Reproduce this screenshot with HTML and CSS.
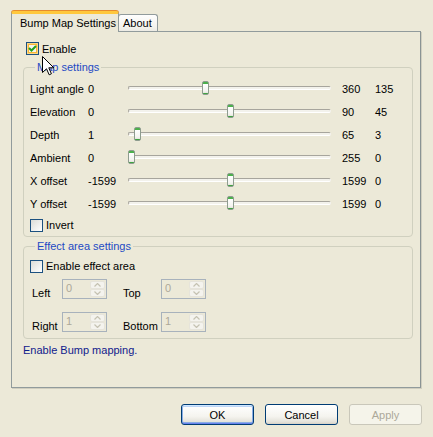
FILE: index.html
```html
<!DOCTYPE html>
<html>
<head>
<meta charset="utf-8">
<link rel="stylesheet" href="styles.css">
</head>
<body>
<div class="dialog">
  <div class="tabs">
    <div class="tab active">Bump Map Settings</div>
    <div class="tab">About</div>
  </div>
  <div class="page">
    <div class="check enable">
      <span class="box checked hover"><svg viewBox="0 0 11 11" width="11" height="11"><path d="M2 5 L4.5 7.5 L9 3" fill="none" stroke="#21A121" stroke-width="2"/></svg></span>
      <span>Enable</span>
    </div>
    <fieldset class="group map">
      <legend>Map settings</legend>
      <div class="sliders">
        <span class="lbl">Light angle</span><span class="min">0</span><div class="track"><div class="groove"></div><div class="thumb" style="left:74px"></div></div><span class="max">360</span><span class="cur">135</span>
        <span class="lbl">Elevation</span><span class="min">0</span><div class="track"><div class="groove"></div><div class="thumb" style="left:99px"></div></div><span class="max">90</span><span class="cur">45</span>
        <span class="lbl">Depth</span><span class="min">1</span><div class="track"><div class="groove"></div><div class="thumb" style="left:6px"></div></div><span class="max">65</span><span class="cur">3</span>
        <span class="lbl">Ambient</span><span class="min">0</span><div class="track"><div class="groove"></div><div class="thumb" style="left:0px"></div></div><span class="max">255</span><span class="cur">0</span>
        <span class="lbl">X offset</span><span class="min">-1599</span><div class="track"><div class="groove"></div><div class="thumb" style="left:99px"></div></div><span class="max">1599</span><span class="cur">0</span>
        <span class="lbl">Y offset</span><span class="min">-1599</span><div class="track"><div class="groove"></div><div class="thumb" style="left:99px"></div></div><span class="max">1599</span><span class="cur">0</span>
      </div>
      <div class="check invert"><span class="box"></span><span>Invert</span></div>
    </fieldset>
    <fieldset class="group effect">
      <legend>Effect area settings</legend>
      <div class="check area"><span class="box"></span><span>Enable effect area</span></div>
      <div class="spins">
        <span class="slbl">Left</span>
        <div class="spin"><span class="sval">0</span><span class="sbtns"><span class="sb"><svg width="7" height="4" viewBox="0 0 7 4"><path d="M0.5 3.5 L3.5 0.5 L6.5 3.5" fill="none" stroke="#C5C2B2" stroke-width="1.2"/></svg></span><span class="sb"><svg width="7" height="4" viewBox="0 0 7 4"><path d="M0.5 0.5 L3.5 3.5 L6.5 0.5" fill="none" stroke="#C5C2B2" stroke-width="1.2"/></svg></span></span></div>
        <span class="slbl">Top</span>
        <div class="spin"><span class="sval">0</span><span class="sbtns"><span class="sb"><svg width="7" height="4" viewBox="0 0 7 4"><path d="M0.5 3.5 L3.5 0.5 L6.5 3.5" fill="none" stroke="#C5C2B2" stroke-width="1.2"/></svg></span><span class="sb"><svg width="7" height="4" viewBox="0 0 7 4"><path d="M0.5 0.5 L3.5 3.5 L6.5 0.5" fill="none" stroke="#C5C2B2" stroke-width="1.2"/></svg></span></span></div>
        <span class="slbl">Right</span>
        <div class="spin"><span class="sval">1</span><span class="sbtns"><span class="sb"><svg width="7" height="4" viewBox="0 0 7 4"><path d="M0.5 3.5 L3.5 0.5 L6.5 3.5" fill="none" stroke="#C5C2B2" stroke-width="1.2"/></svg></span><span class="sb"><svg width="7" height="4" viewBox="0 0 7 4"><path d="M0.5 0.5 L3.5 3.5 L6.5 0.5" fill="none" stroke="#C5C2B2" stroke-width="1.2"/></svg></span></span></div>
        <span class="slbl">Bottom</span>
        <div class="spin"><span class="sval">1</span><span class="sbtns"><span class="sb"><svg width="7" height="4" viewBox="0 0 7 4"><path d="M0.5 3.5 L3.5 0.5 L6.5 3.5" fill="none" stroke="#C5C2B2" stroke-width="1.2"/></svg></span><span class="sb"><svg width="7" height="4" viewBox="0 0 7 4"><path d="M0.5 0.5 L3.5 3.5 L6.5 0.5" fill="none" stroke="#C5C2B2" stroke-width="1.2"/></svg></span></span></div>
      </div>
    </fieldset>
    <p class="status">Enable Bump mapping.</p>
  </div>
  <div class="buttons">
    <button class="btn default">OK</button>
    <button class="btn">Cancel</button>
    <button class="btn disabled">Apply</button>
  </div>
  <svg class="cursor" width="13" height="20" viewBox="0 0 13 20"><path d="M0.5 0.5 L0.5 16.5 L4.5 12.8 L7.2 18.8 L9.4 17.8 L6.8 11.8 L11.8 11.8 Z" fill="#fff" stroke="#000" stroke-width="1" stroke-linejoin="miter"/></svg>
</div>
</body>
</html>
```
FILE: styles.css
```css
html, body {
  margin: 0;
  padding: 0;
}
body {
  background: #ECE9D8;
  font: 11px "Liberation Sans", Arial, sans-serif;
  color: #000;
  width: 433px;
  height: 437px;
  overflow: hidden;
}
.dialog {
  position: relative;
  width: 433px;
  height: 437px;
}
.tabs {
  display: flex;
  align-items: flex-end;
  padding: 11px 0 0 11px;
  height: 20px;
}
.tab {
  box-sizing: border-box;
  border: 1px solid #919B9C;
  border-bottom: none;
  border-radius: 3px 3px 0 0;
  line-height: 15px;
  height: 17px;
  padding: 1px 5px 0 4px;
  background: linear-gradient(#FEFEFE, #F4F3EE 70%, #ECEBE4);
  margin-left: -1px;
}
.tab.active {
  position: relative;
  z-index: 1;
  margin-left: 0;
  width: 108px;
  height: 21px;
  margin-bottom: -1px;
  padding: 2px 0 0 8px;
  line-height: 15px;
  border-top: 3px solid #FFC83C;
  box-shadow: 0 -1px 0 #E68B2C;
  background: #ECE9D8;
  border-radius: 3px 3px 0 0;
}
.page {
  box-sizing: border-box;
  margin-left: 11px;
  width: 410px;
  height: 357px;
  border: 1px solid #919B9C;
  border-right-color: #8A9394;
  box-shadow: 1px 1px 0 #D0CEBF;
  padding: 10px 8px 0 11px;
}
.check {
  display: flex;
  align-items: center;
  gap: 3px;
  height: 13px;
}
.box {
  box-sizing: border-box;
  width: 13px;
  height: 13px;
  border: 1px solid #1C5180;
  background: linear-gradient(135deg, #DCDCD7, #FFFFFF);
  display: flex;
  align-items: center;
  justify-content: center;
}
.box.hover {
  box-shadow: inset 0 0 0 1px #FCD884, inset 0 0 0 2px #F8B636;
  background: #F6F5EF;
}
.box svg { display: block; }
.enable {
  margin-left: 3px;
}
.group {
  margin: 0;
  border: 1px solid #D0D0BF;
  border-radius: 4px;
  min-width: 0;
}
.group legend {
  color: #1E4AC4;
  padding: 0 2px;
  margin-left: 5px;
  line-height: 13px;
}
.map {
  margin-top: 6px;
  padding: 3px 0 1px 6px;
  width: 390px;
  box-sizing: border-box;
}
.sliders {
  display: grid;
  grid-template-columns: 58px 40px 203px 11px 33px 1fr;
  grid-auto-rows: 23px;
  align-items: center;
}
.sliders .max { grid-column: 5; }
.track {
  position: relative;
  height: 23px;
}
.groove {
  position: absolute;
  left: 0;
  right: 0;
  top: 9px;
  height: 4px;
  box-sizing: border-box;
  border: 1px solid #A7A59D;
  border-right-color: #F4F3EE;
  border-bottom-color: #FFFFFF;
  background: #F3F2EC;
  border-radius: 2px;
}
.thumb {
  position: absolute;
  top: 4px;
  width: 7px;
  height: 14px;
  box-sizing: border-box;
  border: 1px solid #8E9C8F;
  border-radius: 2px;
  background: linear-gradient(#4BB04B 0 2px, #FFFFFF 2px, #F4F4F0 9px, #E4E3DC 11px, #3FA33F 11px);
}
.invert {
  margin-left: 0;
  height: 20px;
}
.effect {
  margin-top: 3px;
  padding: 5px 0 6px 6px;
  width: 390px;
  box-sizing: border-box;
}
.area {
  height: 16px;
}
.spins {
  display: grid;
  grid-template-columns: 30px 45px 16px 38px 45px;
  grid-template-rows: 20px 20px;
  row-gap: 13px;
  margin-top: 5px;
  margin-left: 2px;
  align-items: center;
}
.spins .slbl { padding-top: 8px; }
.spins .slbl:nth-child(3), .spins .slbl:nth-child(7) { grid-column: 4; }
.spin {
  box-sizing: border-box;
  height: 20px;
  border: 1px solid #A8B2BC;
  display: flex;
  background: #ECE9D8;
}
.sval {
  flex: 1;
  color: #ACA899;
  padding-left: 3px;
  line-height: 17px;
}
.sbtns {
  width: 15px;
  display: flex;
  flex-direction: column;
  padding: 1px 1px 1px 0;
}
.sb {
  flex: 1;
  display: flex;
  align-items: center;
  justify-content: center;
  background: #F4F3EE;
  border: 1px solid #E6E4DB;
  border-radius: 2px;
}
.sb svg { display: block; }
.status {
  margin: 5px 0 0 0;
  line-height: 13px;
  color: #10208C;
}
.buttons {
  display: flex;
  justify-content: flex-end;
  gap: 11px;
  margin-top: 16px;
  padding-right: 11px;
}
.btn {
  box-sizing: border-box;
  width: 73px;
  height: 21px;
  border: 1px solid #003C74;
  border-radius: 3px;
  background: linear-gradient(#FFFFFF, #F5F4EF 60%, #E3E1D9 90%, #D6D0C5);
  font: 11px "Liberation Sans", Arial, sans-serif;
  color: #000;
  padding: 0;
}
.btn.default {
  box-shadow: inset 0 1px 0 #CEE7FF, inset 0 -1px 0 #6982EE, inset 1px 0 0 #89ADE4, inset -1px 0 0 #89ADE4, inset 0 2px 0 #BCD4F6, inset 0 -2px 0 #89ADE4;
}
.btn.disabled {
  border-color: #C9C7BA;
  background: #F5F4EA;
  color: #ACA899;
}
.cursor {
  position: absolute;
  left: 42px;
  top: 56px;
}
```
